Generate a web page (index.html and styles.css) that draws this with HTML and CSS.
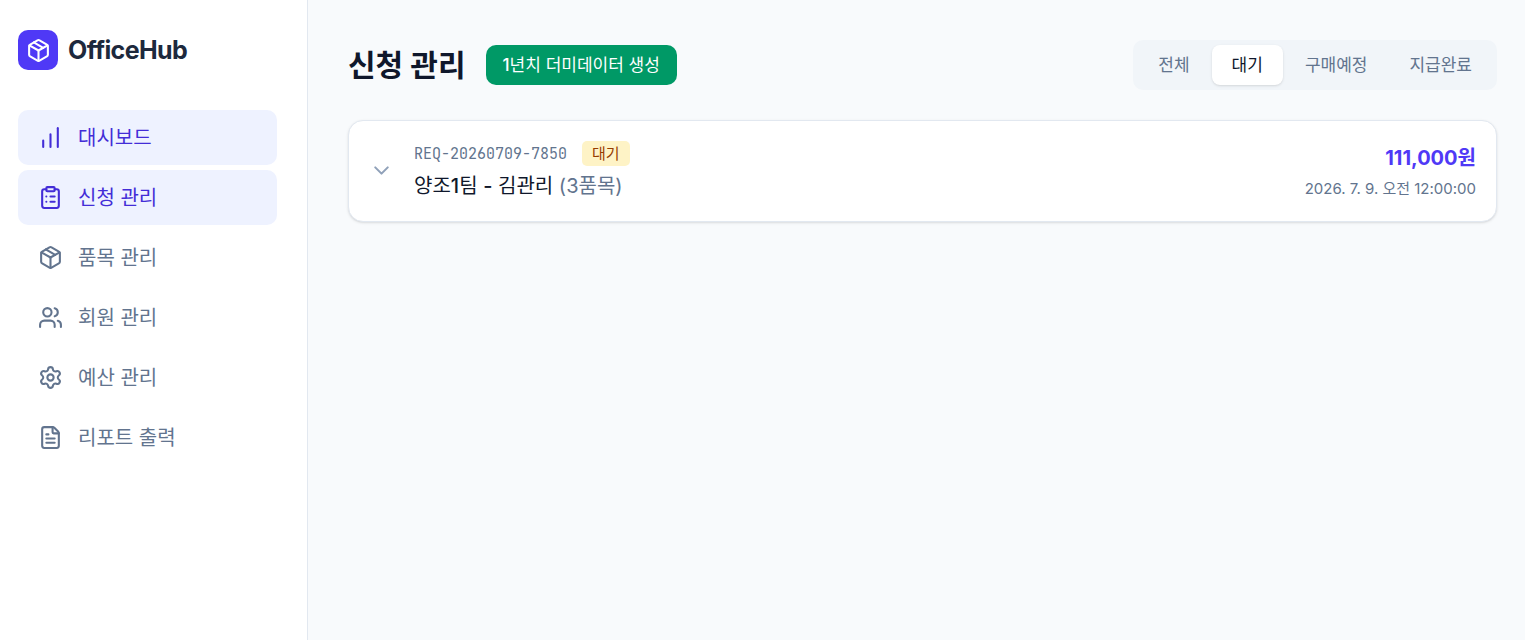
FILE: index.html
```
<!DOCTYPE html>
<html lang="ko">
<head>
    <meta charset="UTF-8">
    <meta name="viewport" content="width=device-width, initial-scale=1.0">
    <title>OfficeHub</title>
    <link rel="stylesheet" href="styles.css">
</head>
<body>

    <aside class="sidebar">
        <div class="brand">
            <span class="brand-logo">
                <svg class="icon" viewBox="0 0 24 24"><path d="M11 21.73a2 2 0 0 0 2 0l7-4A2 2 0 0 0 21 16V8a2 2 0 0 0-1-1.73l-7-4a2 2 0 0 0-2 0l-7 4A2 2 0 0 0 3 8v8a2 2 0 0 0 1 1.73z"/><path d="M12 22V12"/><path d="M3.29 7 12 12l8.71-5"/><path d="m7.5 4.27 9 5.15"/></svg>
            </span>
            <span class="brand-name">OfficeHub</span>
        </div>

        <nav class="nav">
            <a class="nav-item active" href="#dashboard">
                <svg class="icon" viewBox="0 0 24 24"><path d="M5 21v-6"/><path d="M12 21V9"/><path d="M19 21V3"/></svg>
                대시보드
            </a>
            <a class="nav-item active" href="#requests">
                <svg class="icon" viewBox="0 0 24 24"><rect width="8" height="4" x="8" y="2" rx="1" ry="1"/><path d="M16 4h2a2 2 0 0 1 2 2v14a2 2 0 0 1-2 2H6a2 2 0 0 1-2-2V6a2 2 0 0 1 2-2h2"/><path d="M12 11h4"/><path d="M12 16h4"/><path d="M8 11h.01"/><path d="M8 16h.01"/></svg>
                신청 관리
            </a>
            <a class="nav-item" href="#items">
                <svg class="icon" viewBox="0 0 24 24"><path d="M11 21.73a2 2 0 0 0 2 0l7-4A2 2 0 0 0 21 16V8a2 2 0 0 0-1-1.73l-7-4a2 2 0 0 0-2 0l-7 4A2 2 0 0 0 3 8v8a2 2 0 0 0 1 1.73z"/><path d="M12 22V12"/><path d="M3.29 7 12 12l8.71-5"/><path d="m7.5 4.27 9 5.15"/></svg>
                품목 관리
            </a>
            <a class="nav-item" href="#members">
                <svg class="icon" viewBox="0 0 24 24"><path d="M16 21v-2a4 4 0 0 0-4-4H6a4 4 0 0 0-4 4v2"/><path d="M16 3.128a4 4 0 0 1 0 7.744"/><path d="M22 21v-2a4 4 0 0 0-3-3.87"/><circle cx="9" cy="7" r="4"/></svg>
                회원 관리
            </a>
            <a class="nav-item" href="#budget">
                <svg class="icon" viewBox="0 0 24 24"><path d="M9.671 4.136a2.34 2.34 0 0 1 4.659 0 2.34 2.34 0 0 0 3.319 1.915 2.34 2.34 0 0 1 2.33 4.033 2.34 2.34 0 0 0 0 3.831 2.34 2.34 0 0 1-2.33 4.033 2.34 2.34 0 0 0-3.319 1.915 2.34 2.34 0 0 1-4.659 0 2.34 2.34 0 0 0-3.32-1.915 2.34 2.34 0 0 1-2.33-4.033 2.34 2.34 0 0 0 0-3.831A2.34 2.34 0 0 1 6.35 6.051a2.34 2.34 0 0 0 3.319-1.915"/><circle cx="12" cy="12" r="3"/></svg>
                예산 관리
            </a>
            <a class="nav-item" href="#reports">
                <svg class="icon" viewBox="0 0 24 24"><path d="M6 22a2 2 0 0 1-2-2V4a2 2 0 0 1 2-2h8a2.4 2.4 0 0 1 1.704.706l3.588 3.588A2.4 2.4 0 0 1 20 8v12a2 2 0 0 1-2 2z"/><path d="M14 2v5a1 1 0 0 0 1 1h5"/><path d="M10 9H8"/><path d="M16 13H8"/><path d="M16 17H8"/></svg>
                리포트 출력
            </a>
        </nav>
    </aside>

    <main class="main">
        <header class="page-header">
            <div class="page-heading">
                <h1>신청 관리</h1>
                <button class="seed-button" type="button"><span class="medium">1</span>년치 더미데이터 생성</button>
            </div>
            <div class="tabs">
                <button class="tab" type="button">전체</button>
                <button class="tab selected" type="button">대기</button>
                <button class="tab" type="button">구매예정</button>
                <button class="tab" type="button">지급완료</button>
            </div>
        </header>

        <article class="request">
            <button class="expand" type="button" aria-label="상세 보기">
                <svg class="icon" viewBox="0 0 24 24"><path d="m6 9 6 6 6-6"/></svg>
            </button>
            <div class="request-info">
                <div class="request-meta">
                    <span class="request-id">REQ-20260709-7850</span>
                    <span class="badge">대기</span>
                </div>
                <div class="request-title">양조<span class="medium">1</span>팀 <span class="medium">-</span> 김관리 <span class="request-count">(3품목)</span></div>
            </div>
            <div class="request-total">
                <div class="amount">111,000원</div>
                <div class="date">2026. 7. 9. 오전 12:00:00</div>
            </div>
        </article>
    </main>

</body>
</html>
```
FILE: styles.css
```
* {
    box-sizing: border-box;
}
body {
    margin: 0;
    display: flex;
    min-height: 100vh;
    font-family: Inter, "Noto Sans CJK KR", sans-serif;
    font-size: 20px;
    line-height: 30px;
    color: #0f172b;
    background-color: #f8fafc;
}
button {
    font-family: inherit;
    border: none;
    cursor: pointer;
}
.icon {
    display: block;
    flex-shrink: 0;
    width: 25px;
    height: 25px;
    fill: none;
    stroke: currentColor;
    stroke-width: 2;
    stroke-linecap: round;
    stroke-linejoin: round;
}
.medium {
    font-weight: 500;
}

/* Sidebar */
.sidebar {
    flex-shrink: 0;
    width: 308px;
    padding: 30px 30px 30px 18px;
    background-color: white;
    border-right: 1px solid #e2e8f0;
}
.brand {
    display: flex;
    align-items: center;
    gap: 10px;
    margin-bottom: 40px;
}
.brand-logo {
    display: flex;
    align-items: center;
    justify-content: center;
    width: 40px;
    height: 40px;
    border-radius: 10px;
    color: white;
    background-color: #4f39f6;
}
.brand-name {
    font-size: 25px;
    font-weight: 700;
    letter-spacing: -0.025em;
    color: #1d293d;
}
.nav {
    display: flex;
    flex-direction: column;
    gap: 5px;
}
.nav-item {
    display: flex;
    align-items: center;
    gap: 15px;
    height: 55px;
    padding: 0 20px;
    border-radius: 10px;
    color: #62748e;
    text-decoration: none;
}
.nav-item:hover {
    background-color: #f8fafc;
}
.nav-item.active {
    color: #432dd7;
    background-color: #eef2ff;
}

/* Main */
.main {
    flex: 1;
    padding: 40px 28px 40px 40px;
}
.page-header {
    display: flex;
    align-items: center;
    justify-content: space-between;
    margin-bottom: 30px;
}
.page-heading {
    display: flex;
    align-items: center;
    gap: 20px;
}
h1 {
    margin: 0;
    font-size: 30px;
    line-height: 35px;
    font-weight: 700;
}
.seed-button {
    height: 40px;
    padding: 0 17px;
    border-radius: 10px;
    font-size: 17px;
    line-height: 26px;
    color: white;
    background-color: #009966;
}
.tabs {
    display: flex;
    gap: 2px;
    padding: 5px;
    border-radius: 10px;
    background-color: #f1f5f9;
}
.tab {
    height: 40px;
    padding: 0 20px;
    border-radius: 8px;
    font-size: 17px;
    line-height: 26px;
    color: #62748e;
    background-color: transparent;
}
.tab.selected {
    color: #0f172b;
    background-color: white;
    box-shadow: 0 1px 3px rgba(0, 0, 0, 0.1), 0 1px 2px -1px rgba(0, 0, 0, 0.1);
}

/* Request card */
.request {
    display: flex;
    align-items: center;
    gap: 20px;
    padding: 20px;
    border: 1px solid #e2e8f0;
    border-radius: 15px;
    background-color: white;
    box-shadow: 0 1px 3px rgba(0, 0, 0, 0.1), 0 1px 2px -1px rgba(0, 0, 0, 0.1);
}
.expand {
    padding: 0 0 1px;
    color: #90a1b9;
    background: none;
}
.request-info {
    flex: 1;
}
.request-meta {
    display: flex;
    align-items: center;
    gap: 15px;
    margin-bottom: 5px;
    font-size: 15px;
    line-height: 25px;
}
.request-id {
    font-family: "JetBrains Mono", "Liberation Mono", monospace;
    line-height: 22px;
    color: #62748e;
}
.badge {
    padding: 0 10px;
    border-radius: 5px;
    color: #973c00;
    background-color: #fef3c6;
}
.request-count {
    color: #62748e;
}
.request-total {
    text-align: right;
}
.amount {
    line-height: 35px;
    font-weight: 700;
    color: #4f39f6;
}
.date {
    font-size: 15px;
    line-height: 25px;
    color: #62748e;
}
```
